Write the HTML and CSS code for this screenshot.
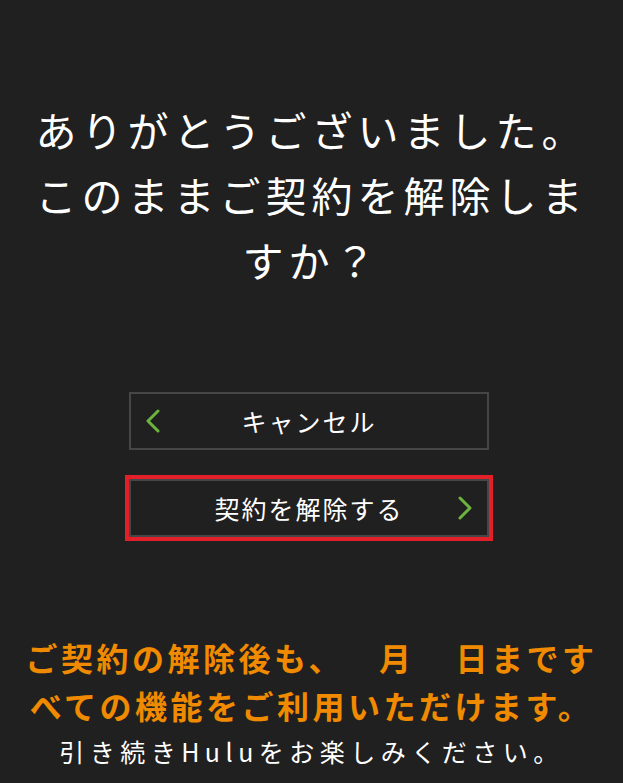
FILE: index.html
```html
<!DOCTYPE html>
<html lang="ja">
<head>
  <meta charset="UTF-8">
  <meta name="viewport" content="width=device-width, initial-scale=1">
  <title>解約の確認</title>
  <link rel="stylesheet" href="styles.css">
</head>
<body>
<main class="confirm">
  <h1 class="confirm-title">ありがとうございました。このままご契約を解除しますか？</h1>

  <div class="actions">
    <button class="btn btn-back" type="button">
      <svg class="chevron" viewBox="0 0 16 24" width="16" height="24"><polyline points="13,2 3,12 13,22" /></svg>
      <span class="btn-label">キャンセル</span>
    </button>
    <button class="btn btn-next is-focused" type="button">
      <span class="btn-label">契約を解除する</span>
      <svg class="chevron" viewBox="0 0 16 24" width="16" height="24"><polyline points="3,2 13,12 3,22" /></svg>
    </button>
  </div>

  <p class="notice">
    ご契約の解除後も、<span class="date-blank date-blank-month"></span>月<span class="date-blank date-blank-day"></span>日まです<br />べての機能をご利用いただけます。
  </p>
  <p class="note">引き続きHuluをお楽しみください。</p>
</main>
</body>
</html>
```

FILE: styles.css
```css
html,
body {
  margin: 0;
  background: #202020;
}

body {
  font-family: 'Noto Sans CJK JP', 'Noto Sans', sans-serif;
  color: #ffffff;
  -webkit-font-smoothing: antialiased;
}

.confirm {
  display: flex;
  flex-direction: column;
  align-items: center;
  padding: 97px 0 0;
  text-align: center;
}

.confirm-title {
  width: 570px;
  margin: 0;
  font-size: 41px;
  font-weight: 400;
  line-height: 65px;
  letter-spacing: 5px;
}

.actions {
  display: flex;
  flex-direction: column;
  align-items: center;
  gap: 29px;
  margin-top: 100px;
  padding-right: 5px;
}

.btn {
  display: grid;
  grid-template-columns: 24px 1fr 24px;
  align-items: center;
  box-sizing: border-box;
  width: 360px;
  height: 58px;
  padding: 0 14px;
  background: #202020;
  border: 2px solid #464646;
  color: #ffffff;
  font-family: inherit;
  font-size: 25px;
  letter-spacing: 2px;
  cursor: pointer;
}

.btn-label {
  grid-column: 2;
  grid-row: 1;
}

.btn-back .chevron {
  grid-column: 1;
  grid-row: 1;
}

.btn-next .chevron {
  grid-column: 3;
  grid-row: 1;
  justify-self: end;
}

.chevron {
  fill: none;
  stroke: #6cb33f;
  stroke-width: 3;
  stroke-linecap: round;
  stroke-linejoin: round;
}

.is-focused {
  outline: 4px solid #e3202a;
  outline-offset: 0;
}

.notice {
  margin: 96px 0 0;
  color: #f08a00;
  font-size: 32px;
  font-weight: 700;
  line-height: 48px;
  letter-spacing: 3.5px;
}

.date-blank {
  display: inline-block;
}

.date-blank-month {
  width: 35px;
}

.date-blank-day {
  width: 41px;
}

.note {
  margin: 0;
  font-size: 25px;
  line-height: 44px;
  letter-spacing: 5.5px;
}
```
